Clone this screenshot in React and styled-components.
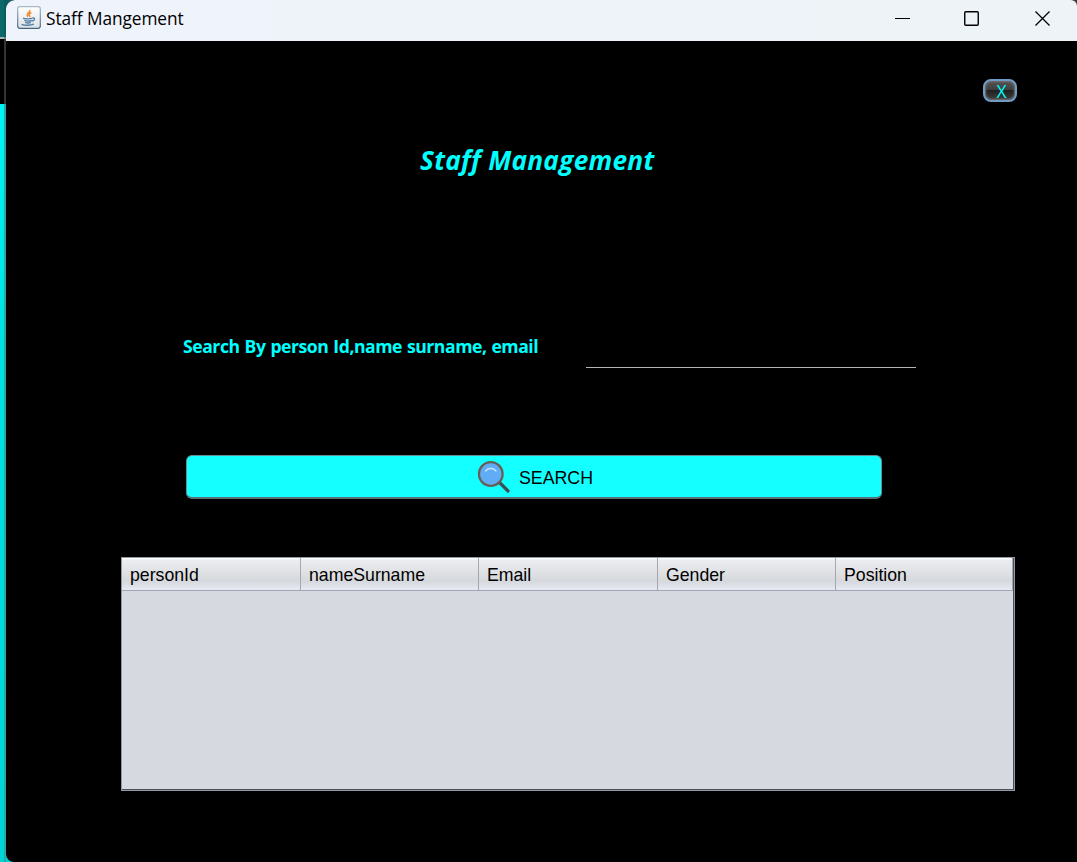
import React from "react";
import styled, { createGlobalStyle } from "styled-components";

const GlobalStyle = createGlobalStyle`
  * { box-sizing: border-box; }
  html, body { margin: 0; background: #000; }
  body { width: 1077px; height: 862px; overflow: hidden; }
`;

const Desktop = styled.div`
  display: flex;
  width: 1077px;
  height: 862px;
  background: linear-gradient(90deg, #0b6064 0 6px, #0b6064 50%, #3c3c3c 50%) top / 100% 37px no-repeat,
    linear-gradient(90deg, #00d2d2 50%, #000 50%) bottom / 100% 12px no-repeat,
    #000;
`;

const Backdrop = styled.div`
  flex: 0 0 6px;
  display: flex;
  flex-direction: column;
`;

const Strip = styled.div`
  flex: ${(p) => (p.$height ? `0 0 ${p.$height}px` : "1")};
  background: linear-gradient(90deg, transparent 4px, ${(p) => p.$shade} 4px), ${(p) => p.$fill};
`;

const Window = styled.main`
  flex: 1;
  display: flex;
  flex-direction: column;
  background: #000;
  border-radius: 9px 6px 0 8px;
  overflow: hidden;
`;

const TitleBar = styled.header`
  flex: 0 0 41px;
  display: flex;
  align-items: flex-start;
  padding-left: 11px;
  background: linear-gradient(90deg, #eff3fb 0%, #eef3fa 50%, #eef3f7 100%);
`;

const JavaBadge = styled.svg`
  width: 24px;
  height: 24px;
  margin-top: 6px;
`;

const Caption = styled.span`
  flex: 1;
  padding-left: 5px;
  font: 400 17.3px/38px "Open Sans", "Noto Sans", sans-serif;
  letter-spacing: -0.07px;
  color: #000;
`;

const WindowControls = styled.svg`
  width: 200px;
  height: 41px;
`;

const Content = styled.section`
  flex: 1;
  display: flex;
  flex-direction: column;
`;

const ExitButton = styled.button`
  align-self: flex-end;
  width: 34px;
  height: 23px;
  margin: 38px 60px 0 0;
  padding: 0 0 0 3px;
  border: 2px solid #6f9bc8;
  border-radius: 8px;
  background: linear-gradient(#555 0, #3d3d3d 48%, #202020 50%, #404040 100%);
  box-shadow: inset 0 0 2px 1px #77706c;
  font: 400 17.5px/20px "Open Sans", sans-serif;
  color: #00ffff;
`;

const Heading = styled.h1`
  margin: 38px 0 0 414px;
  font: italic 700 26.2px/40px "Open Sans", "Noto Sans", sans-serif;
  letter-spacing: 0.27px;
  white-space: nowrap;
  color: #00ffff;
`;

const SearchRow = styled.div`
  display: flex;
  height: 43px;
  margin: 145px 0 0 177px;
`;

const Label = styled.label`
  width: 403px;
  font: 700 17.6px/42px "Open Sans", "Noto Sans", sans-serif;
  letter-spacing: -0.45px;
  word-spacing: 0.8px;
  white-space: nowrap;
  color: #00ffff;
`;

const SearchInput = styled.input`
  width: 330px;
  padding: 0;
  border: 0;
  border-bottom: 1px solid #b4b4b4;
  background: transparent;
  color: #00ffff;
  outline: 0;
`;

const SearchButton = styled.button`
  display: flex;
  align-items: center;
  justify-content: center;
  gap: 7px;
  width: 696px;
  height: 44px;
  margin: 87px 0 0 180px;
  padding: 0 0 0 1px;
  border: 1px solid #5f8e96;
  border-bottom: 2px solid #577276;
  border-radius: 6px;
  background: #14ffff;
  font: 400 17.8px/40px "Liberation Sans", Arial, sans-serif;
  color: #000;
`;

const ButtonText = styled.span`
  padding-top: 2px;
`;

const Magnifier = styled.svg`
  width: 36px;
  height: 36px;
`;

const Table = styled.div`
  width: 894px;
  height: 234px;
  margin: 58px 0 0 115px;
  border: 1px solid #9298a2;
  box-shadow: inset -1px -1px 0 #4c525e;
  background: #d6d9e0;
`;

const HeaderRow = styled.div`
  display: grid;
  grid-template-columns: 179px 178px 179px 178px 1fr;
  grid-template-rows: 32px;
  height: 33px;
  margin-right: 1px;
  border-bottom: 1px solid #a2a6b2;
  background: linear-gradient(#fff 0, #ebecef 8%, #dfe0e3 48%, #d5d8dd 72%, #e6eaf2 100%);
`;

const HeaderCell = styled.div`
  padding-left: 8px;
  border-right: 1px solid #a4a7ae;
  font: 400 17.7px/34px "Liberation Sans", Arial, sans-serif;
  color: #000;
`;

const columns = ["personId", "nameSurname", "Email", "Gender", "Position"];

export default function App() {
  return (
    <>
      <GlobalStyle />
      <Desktop>
        <Backdrop>
          <Strip $height={37} $fill="#0b686b" $shade="#0b5b5e" />
          <Strip $height={2} $fill="#a4b5b6" $shade="#708384" />
          <Strip $height={65} $fill="#000" $shade="#343434" />
          <Strip $fill="linear-gradient(#00f4f4, #00e2e2 30%, #00d4d4)" $shade="#24aaaa" />
        </Backdrop>
        <Window>
          <TitleBar>
            <JavaBadge viewBox="0 0 24 24">
              <defs>
                <linearGradient id="badge" x2="0" y2="1">
                  <stop stopColor="#fff" />
                  <stop offset="1" stopColor="#dce1e5" />
                </linearGradient>
                <linearGradient id="badgeEdge" x2="0" y2="1">
                  <stop stopColor="#a9bac7" />
                  <stop offset="1" stopColor="#446582" />
                </linearGradient>
              </defs>
              <rect x=".7" y=".7" width="22.6" height="21.6" rx="2.2" fill="url(#badge)" stroke="url(#badgeEdge)" strokeWidth="1.2" />
              <path d="M12.6 4c1.6 2.2-4.6 3.2-1.6 6.6M14.4 6.6c-2.8 1.2-2.6 2-1.3 4.2" fill="none" stroke="#ef8b36" strokeWidth="1.6" />
              <path d="M6 12.2c2 1 7 .9 9.6-.2M7.4 14.3c2 .8 5.6.8 7.4 0M8.2 16.4c1.8.7 4.1.7 5.7 0M15.4 11.9c3.2-.6 2.6 2.6-.6 3.1M4.6 18.3c3 1.3 9.3 1.2 12.2-.2" fill="none" stroke="#4f7da3" strokeWidth="1.35" />
            </JavaBadge>
            <Caption>Staff Mangement</Caption>
            <WindowControls viewBox="0 0 200 41" fill="none" stroke="#000">
              <path d="M18 18.5h15" />
              <rect x="87.75" y="11.75" width="13.5" height="13.5" rx="1" strokeWidth="1.4" />
              <path d="m158.5 11.5 14 14m0-14-14 14" strokeWidth="1.25" />
            </WindowControls>
          </TitleBar>
          <Content>
            <ExitButton>X</ExitButton>
            <Heading>Staff Management</Heading>
            <SearchRow>
              <Label htmlFor="query">Search By person Id,name surname, email</Label>
              <SearchInput id="query" />
            </SearchRow>
            <SearchButton>
              <Magnifier viewBox="0 0 36 36">
                <path d="m23 23 9 9" stroke="#504e50" strokeWidth="3.2" strokeLinecap="round" />
                <path d="m24.5 24 8 8" stroke="#24516a" strokeWidth="1.2" />
                <circle cx="14.8" cy="15" r="11.8" fill="#60adf5" stroke="#665f58" strokeWidth="2.3" />
                <path d="M9.8 11.7c2.5-3.2 7.5-3.2 10 0" fill="none" stroke="#c0e0ff" strokeWidth="1.8" strokeLinecap="round" />
              </Magnifier>
              <ButtonText>SEARCH</ButtonText>
            </SearchButton>
            <Table>
              <HeaderRow>
                {columns.map((name) => (
                  <HeaderCell key={name}>{name}</HeaderCell>
                ))}
              </HeaderRow>
            </Table>
          </Content>
        </Window>
      </Desktop>
    </>
  );
}
